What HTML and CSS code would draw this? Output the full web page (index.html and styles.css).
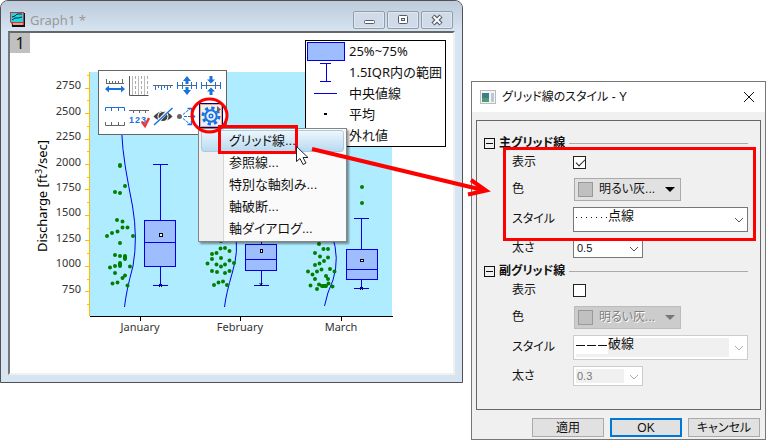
FILE: index.html
```html
<!DOCTYPE html>
<html lang="ja">
<head>
<meta charset="utf-8">
<title>Graph1</title>
<link rel="stylesheet" href="styles.css">
</head>
<body>
<main class="desktop">
  <section class="graph-window">
    <header class="titlebar">
      <svg class="app-icon" width="16" height="16" viewBox="0 0 16 16" aria-hidden="true">
        <path d="M1 1h14v14H2z" fill="#111"/>
        <path d="M0 0h14v13H3L0 10z" fill="#c33"/>
        <path d="M1 1h12v9H1z" fill="#18d8e0"/>
        <path d="M2 5l3-1 2-2 5 0M2 8l3-2 3 0 4-1" stroke="#124" fill="none"/>
        <path d="M3 12h10" stroke="#fff"/>
      </svg>
      <h1 class="window-title">Graph1 *</h1>
      <div class="window-buttons">
        <button class="wbtn" aria-label="最小化"><svg width="14" height="12" viewBox="0 0 14 12"><rect x="2.5" y="6.5" width="10" height="3" rx="1" fill="#fff" stroke="#555a66"/></svg></button>
        <button class="wbtn" aria-label="最大化"><svg width="14" height="12" viewBox="0 0 14 12"><rect x="2.5" y="1.5" width="9" height="8" rx="1" fill="#fff" stroke="#555a66"/><rect x="5.5" y="4.5" width="3" height="2" fill="#dde6f0" stroke="#555a66"/></svg></button>
        <button class="wbtn" aria-label="閉じる"><svg width="14" height="12" viewBox="0 0 14 12"><path d="M3 2L11 10M11 2L3 10" stroke="#555a66" stroke-width="4.4"/><path d="M3.5 2.5L10.5 9.5M10.5 2.5L3.5 9.5" stroke="#fff" stroke-width="2"/></svg></button>
      </div>
    </header>
    <div class="client">
      <span class="layer-tab">1</span>
      <svg class="chart" viewBox="10 33 443 340" preserveAspectRatio="xMinYMin meet" role="img" aria-label="Discharge">
        <rect x="90" y="72" width="302" height="244" fill="#b0ecff"/>
        <path d="M89.5 72V316M85 88.5h5M85 113.5h5M85 139.5h5M85 164.5h5M85 189.5h5M85 215.5h5M85 240.5h5M85 266.5h5M85 291.5h5M87 75.5h3M87 100.5h3M87 126.5h3M87 151.5h3M87 177.5h3M87 202.5h3M87 228.5h3M87 253.5h3M87 279.5h3M87 304.5h3" stroke="#ffbb00" fill="none"/>
        <path d="M90 316.5H393M140.5 317v4M240.5 317v4M341.5 317v4" stroke="#000" fill="none"/>
        <g class="tick-text y-text">
          <text x="81" y="89">2750</text><text x="81" y="115">2500</text><text x="81" y="140">2250</text>
          <text x="81" y="166">2000</text><text x="81" y="191">1750</text><text x="81" y="216">1500</text>
          <text x="81" y="242">1250</text><text x="81" y="267">1000</text><text x="81" y="293">750</text>
        </g>
        <g class="tick-text x-text">
          <text x="140" y="331">January</text><text x="240" y="331">February</text><text x="341" y="331">March</text>
        </g>
        <text class="axis-title" transform="translate(47 252) rotate(-90)">Discharge [ft<tspan class="sup" dy="-5">3</tspan><tspan dy="5">/sec]</tspan></text>
        <g fill="none" stroke="#0000e8">
          <path d="M121.5 130Q122.5 150 125.5 168T132.5 206Q138 238 133 266Q126 292 124.5 307"/>
          <path d="M235 235Q239 250 232.5 272Q226 294 224.5 307"/>
          <path d="M332 235Q340 258 333 280Q327 293 324.5 306"/>
        </g>
        <g stroke="#0000e8" fill="#9dbdff">
          <path d="M160.5 220V164.5M153 164.5h15M160.5 267v18.5M153 285.5h15"/><rect x="144.5" y="220.5" width="31" height="46"/><path d="M145 242.5h31"/>
          <path d="M261.5 244V200M261.5 271v14.5M254 285.5h15"/><rect x="245.5" y="244.5" width="31" height="26"/><path d="M246 259.5h31"/>
          <path d="M361.5 249V218.5M354 218.5h15M361.5 280v8.5M354 288.5h15"/><rect x="346.5" y="249.5" width="31" height="30"/><path d="M347 269.5h31"/>
        </g>
        <g fill="#fff" stroke="#000"><rect x="159.5" y="233.5" width="3" height="3"/><rect x="260.5" y="249.5" width="2" height="3"/><rect x="360.5" y="259.5" width="3" height="2"/></g>
        <path d="M159 284l3 3M162 284l-3 3M259.5 283l3 3M262.5 283l-3 3M360 287l3 3M363 287l-3 3" stroke="#000"/>
        <path class="dots" d="M120 165v1M125 186h0M115 192h0M120 193h0M117 220h0M122.5 221.5h0M122.5 227.5h0M127.5 227.5h0M107 236h0M112 233h0M117.5 231.5h0M133 236h0M120 243h0M115 255h0M120 256h0M125 256v3M120 263v3M115 266h0M110 267.5h0M130 266.5h0M115 273h0M125 275.5h0M122.5 278h0M112.5 283.5h0M117.5 282.5h0M127.5 285.5h0"/>
        <path class="dots" d="M207.5 263.5h0M212 254h0M216.5 253h0M212 259h0M220.5 248.5h0M225 248h0M229.5 251h0M221 258h0M216.5 264.5h0M221 266.5h0M225 264.5h0M229.5 260.5h0M234 263h0M212 271h0M217 272h0M225 273h0M229.5 271h0M214 285h0M218.5 282.5h0M223 281.5h0M227 285h0M221 241h0"/>
        <path class="dots" d="M362 187h0M362 203h0M319 244h0M323.5 249h0M328 249h0M315 253h0M320 256.5h0M328 257.5h0M315 265h0M319.5 263.5h0M324 261h0M308 271.5h0M312.5 274.5h0M317 271.5h0M321.5 269.5h0M330 269h0M334.5 271.5h0M326 276h0M328 279h0M315 279h0M310.5 285.5h0M319 284.5h0M322 286h4M317 289h0M332.5 286.5h0M328.5 283.5h0"/>
      </svg>
      <ul class="legend">
        <li><svg width="40" height="21" viewBox="0 0 40 21"><rect x="1.5" y="1.5" width="37" height="18" fill="#9dbdff" stroke="#0000e8"/></svg>25%~75%</li>
        <li><svg width="40" height="21" viewBox="0 0 40 21"><path d="M20.5 1.5v18M14 1.5h11M14 19.5h11" stroke="#0000e8"/></svg>1.5IQR内の範囲</li>
        <li><svg width="40" height="21" viewBox="0 0 40 21"><path d="M8 10.5h23" stroke="#0000e8"/></svg>中央値線</li>
        <li><svg width="40" height="21" viewBox="0 0 40 21"><path d="M18 9h3v2h-3z"/></svg>平均</li>
        <li><svg width="40" height="21" viewBox="0 0 40 21"></svg>外れ値</li>
      </ul>
      <div class="toolbar">
        <button class="tool" aria-label="軸の長さ"><svg viewBox="0 0 24 24"><path d="M5 10.5h18M5.5 6v4M8.5 8v2M11.5 8v2M14.5 8v2M17.5 8v2M21.5 6v4" stroke="#666"/><path d="M4 16l4-3.500v2.500h12v-2.500l4 3.500-4 3.500v-2.500h-12v2.500z" fill="#1a72de"/></svg></button>
        <button class="tool" aria-label="グリッド"><svg viewBox="0 0 24 24"><path d="M4.5 3v19.500h19" stroke="#555" fill="none"/><path d="M7.5 3v19M13.5 3v19M19.5 3v19" stroke="#bbb"/><path d="M10.5 3v19M16.5 3v19M22.5 3v19" stroke="#aaa" stroke-dasharray="3 2"/></svg></button>
        <button class="tool" aria-label="目盛"><svg viewBox="0 0 24 24"><path d="M4 12.5h20" stroke="#666"/><path d="M6.5 13v4M9.5 13v2M12.5 13v4M15.5 13v2M18.5 13v4M21.5 13v2" stroke="#1a72de"/></svg></button>
        <button class="tool" aria-label="拡大"><svg viewBox="0 0 24 24"><path d="M4 12.5h20" stroke="#666"/><path d="M4.5 9v7M9.5 9v7M18.5 9v7M23.5 9v7" stroke="#1a72de"/><path d="M14 3l4 5h-2.500v3h-3V8H10zM14 22l4-5h-2.500v-3h-3v3H10z" fill="#1a72de"/></svg></button>
        <button class="tool" aria-label="縮小"><svg viewBox="0 0 24 24"><path d="M4 12.5h20" stroke="#666"/><path d="M4.5 9v7M9.5 9v7M18.5 9v7M23.5 9v7" stroke="#1a72de"/><path d="M14 10.500l4-4h-2.500V3h-3v3.500H10zM14 14.500l4 4h-2.500V22h-3v-3.500H10z" fill="#1a72de"/></svg></button>
        <button class="tool" aria-label="反対側の軸"><svg viewBox="0 0 24 24"><path d="M4.5 7V3.500h19V7M10.5 4v3M17.5 4v3" stroke="#1a72de" fill="none"/><path d="M4.5 18v3.500h19V18M10.5 18v3M17.5 18v3" stroke="#666" fill="none"/></svg></button>
        <button class="tool" aria-label="目盛ラベル"><svg viewBox="0 0 24 24"><path d="M4 6.5h20M8.5 7v2M14.5 7v2M20.5 7v2" stroke="#666"/><text class="num" x="4" y="19">1</text><text class="num" x="10" y="19">2</text><text class="num" x="16" y="19">3</text><path d="M17 18l3 4 4-8" stroke="#ed3537" stroke-width="2.5" fill="none"/></svg></button>
        <button class="tool" aria-label="非表示"><svg viewBox="0 0 24 24"><path d="M4.5 12.5Q14 2 23.5 12.5Q14 22 4.5 12.5z" fill="#404040"/><circle cx="14" cy="12.5" r="5.5" fill="#fff"/><circle cx="14" cy="12.5" r="4.5" fill="#404040"/><path d="M7 19.500L22 4" stroke="#fff" stroke-width="3"/><path d="M5 21L23.500 4" stroke="#1a72de" stroke-width="1.5"/></svg></button>
        <button class="tool" aria-label="線の方向"><svg viewBox="0 0 24 24"><circle cx="6.5" cy="12.5" r="2.5" fill="#666"/><g stroke="#1a72de" fill="none"><path d="M10 10.500L18 4M11 12.500h10M10 14.500L18 21" stroke-dasharray="3 1"/><path d="M14.500 4.500h4v4M18.500 9.500l3 3-3 3M14.500 20.500h4v-4" stroke-width="1.5"/></g></svg></button>
        <button class="tool active" aria-label="軸の設定"><svg viewBox="0 0 24 24"><circle cx="12" cy="12" r="8" fill="none" stroke="#1a72de" stroke-width="3" stroke-dasharray="3.2 3.083"/><circle cx="12" cy="12" r="5.7" fill="none" stroke="#1a72de" stroke-width="2"/><circle cx="12" cy="12" r="1.8" fill="none" stroke="#1a72de" stroke-width="1.4"/><path d="M18 2l4 3.500-4 3.500z" fill="#666"/></svg></button>
      </div>
      <div class="menu">
        <button class="menu-item hot">グリッド線...</button>
        <button class="menu-item">参照線...</button>
        <button class="menu-item">特別な軸刻み...</button>
        <button class="menu-item">軸破断...</button>
        <button class="menu-item">軸ダイアログ...</button>
      </div>
    </div>
  </section>

  <section class="dialog">
    <header class="dialog-title">
      <svg width="16" height="14" viewBox="0 0 16 14" aria-hidden="true"><rect x=".5" y=".5" width="15" height="13" fill="#f4f4f4" stroke="#bbb"/><path d="M2 3h7v9H2z" fill="#3c7d88"/><path d="M2 8h7v4H2z" fill="#4d9b78"/><path d="M11 3h3v9h-3z" fill="#b8c8d8"/></svg>
      <h2 class="dialog-name">グリッド線のスタイル - Y</h2>
      <button class="close" aria-label="閉じる"><svg width="12" height="12" viewBox="0 0 12 12"><path d="M1 1l10 10M11 1L1 11" stroke="#111"/></svg></button>
    </header>
    <form class="panel">
      <fieldset class="group">
        <legend class="group-head"><svg width="11" height="11" viewBox="0 0 11 11"><rect x=".5" y=".5" width="10" height="10" fill="none" stroke="#111"/><path d="M2 5.5h7" stroke="#111"/></svg><span>主グリッド線</span></legend>
        <div class="row check-row"><label for="show1">表示</label><input class="check" id="show1" type="checkbox" checked></div>
        <div class="row"><label for="color1">色</label><button class="color" id="color1" type="button"><i class="swatch"></i><span>明るい灰...</span><i class="caret"></i></button></div>
        <div class="row"><label for="style1">スタイル</label><span class="select-box wide"><select id="style1"><option>点線</option></select><svg class="line-sample" width="33" height="17" viewBox="0 0 33 17"><path d="M1 8h1v1h-1zM6 8h1v1h-1zM11 8h1v1h-1zM16 8h1v1h-1zM21 8h1v1h-1zM26 8h1v1h-1zM31 8h1v1h-1z" fill="#111"/></svg><svg class="chevron" width="10" height="6" viewBox="0 0 10 6"><path d="M1 1l4 4 4-4"/></svg></span></div>
        <div class="row size-row"><label for="size1">太さ</label><span class="select-box small"><select id="size1"><option>0.5</option></select><svg class="chevron" width="10" height="6" viewBox="0 0 10 6"><path d="M1 1l4 4 4-4"/></svg></span></div>
      </fieldset>
      <fieldset class="group">
        <legend class="group-head"><svg width="11" height="11" viewBox="0 0 11 11"><rect x=".5" y=".5" width="10" height="10" fill="none" stroke="#111"/><path d="M2 5.5h7" stroke="#111"/></svg><span>副グリッド線</span></legend>
        <div class="row check-row"><label for="show2">表示</label><input class="check" id="show2" type="checkbox"></div>
        <div class="row"><label for="color2">色</label><button class="color" id="color2" type="button" disabled><i class="swatch"></i><span>明るい灰...</span><i class="caret"></i></button></div>
        <div class="row"><label for="style2">スタイル</label><span class="select-box wide off"><select id="style2" disabled><option>破線</option></select><svg class="line-sample" width="33" height="17" viewBox="0 0 33 17"><path d="M0 0h33v17H0z" fill="#fff"/><path d="M1 8.5h31" stroke="#111" stroke-dasharray="9 2"/></svg><svg class="chevron" width="10" height="6" viewBox="0 0 10 6"><path d="M1 1l4 4 4-4"/></svg></span></div>
        <div class="row size-row"><label for="size2">太さ</label><span class="select-box small off"><select id="size2" disabled><option>0.3</option></select><svg class="chevron" width="10" height="6" viewBox="0 0 10 6"><path d="M1 1l4 4 4-4"/></svg></span></div>
      </fieldset>
    </form>
    <footer class="actions">
      <button class="action">適用</button>
      <button class="action default">OK</button>
      <button class="action">キャンセル</button>
    </footer>
  </section>

  <svg class="marks" width="766" height="440" viewBox="0 0 766 440" aria-hidden="true">
    <g fill="none" stroke="#f00" stroke-width="3">
      <ellipse cx="209.5" cy="115.5" rx="17.5" ry="16.5"/>
      <rect x="219.5" y="126.5" width="77" height="26"/>
      <rect x="504.5" y="148.5" width="250" height="91"/>
      <path d="M312 149L485 190.500" stroke-width="4"/>
      <path d="M471 180L486 190.500L468 194.500" stroke-width="4"/>
    </g>
    <path d="M296.500 146.500v15l3.500-3 3 6 3-1.500-3-5.500h5z" fill="#fff" stroke="#223"/>
  </svg>
</main>
</body>
</html>
```

FILE: styles.css
```css
* { box-sizing: border-box; }
body {
  margin: 0;
  background: #fff;
  color: #111;
  font: 12px/16px "Liberation Sans", "Noto Sans CJK JP", sans-serif;
  font-feature-settings: "palt";
}
button, select, input { font: inherit; color: inherit; margin: 0; font-feature-settings: inherit; }
button { padding: 0; }
svg { display: block; flex: none; }
h1, h2, ul { margin: 0; padding: 0; font-weight: normal; }

.desktop { position: relative; display: flex; align-items: flex-start; gap: 8px; }

/* Graph window */
.graph-window {
  flex: 1;
  min-width: 0;
  border: 1px solid #505055;
  border-radius: 8px 8px 0 0;
  background: #d7e4f2;
  padding: 0 7px 7px;
}
.titlebar {
  display: flex;
  align-items: center;
  height: 30px;
  margin: 0 -7px;
  padding: 7px 9px 0;
  gap: 4px;
  border-radius: 7px 7px 0 0;
  background: linear-gradient(#bccad9, #d7e4f2);
}
.window-title { flex: 1; color: #999; font: 13px/16px "Noto Sans", sans-serif; }
.window-buttons { display: flex; gap: 2px; }
.wbtn {
  display: flex;
  align-items: center;
  justify-content: center;
  width: 32px;
  height: 18px;
  border: 1px solid #929dab;
  border-radius: 2px;
  background: #cfdbe8;
  box-shadow: inset 0 0 0 1px #dfe8f2;
}
.client {
  position: relative;
  border: 2px solid #f0f0f0;
  border-top-color: #666;
  border-left-color: #777;
  background: #fff;
}
.layer-tab {
  position: absolute;
  top: 0;
  left: 0;
  width: 20px;
  background: #c0c0c0;
  font: 16px/20px "Noto Sans", sans-serif;
  text-align: center;
}
.chart { width: 100%; height: 340px; }
.tick-text { font: 11px "Noto Sans", sans-serif; fill: #333; }
.y-text { text-anchor: end; }
.x-text { text-anchor: middle; }
.axis-title { font: 13px "Noto Sans", sans-serif; }
.sup { font-size: 9px; }
.dots { stroke: #008000; stroke-width: 4; stroke-linecap: round; fill: none; }

.legend {
  position: absolute;
  top: 7px;
  left: 295px;
  width: 141px;
  border: 1px solid #000;
  background: #fff;
  list-style: none;
  font: 13px/21px "Noto Sans", "Noto Sans CJK JP", sans-serif;
}
.legend li { display: flex; align-items: center; gap: 3px; white-space: nowrap; }

.toolbar {
  position: absolute;
  top: 37px;
  left: 88px;
  display: grid;
  grid-template-columns: repeat(5, 24px);
  row-gap: 6px;
  padding: 1px 5px 6px 2px;
  border: 1px solid #666;
  background: #fff;
}
.tool { width: 24px; height: 25px; border: 0; background: none; }
.tool svg { width: 24px; height: 24px; overflow: visible; }
.num { font: bold 9px "Liberation Sans", sans-serif; fill: #1a72de; }
.active {
  display: flex;
  align-items: center;
  justify-content: center;
  margin-left: 2px;
  border: 1px solid #000080;
  background: #e9f0fa;
  box-shadow: inset 0 0 0 1px #f0a070;
}

.menu {
  position: absolute;
  top: 95px;
  left: 188px;
  width: 149px;
  padding: 1px 2px;
  border: 1px solid #858585;
  background: linear-gradient(90deg, #f0f0f0 24px, #d5d5d5 24px, #d5d5d5 25px, #fafafa 25px);
  box-shadow: 2px 2px 2px rgba(0, 0, 0, .4);
}
.menu-item {
  display: block;
  width: 100%;
  height: 22px;
  padding: 0 0 0 27px;
  border: 1px solid transparent;
  border-radius: 3px;
  background: none;
  text-align: left;
  font-size: 13px;
  line-height: 18px;
}
.hot { border-color: #a8cbe5; background: linear-gradient(#edf6fc, #b9daf1); }

/* Dialog */
.dialog {
  width: 295px;
  margin-top: 81px;
  border: 1px solid #777;
  background: #f0f0f0;
}
.dialog-title {
  display: flex;
  align-items: center;
  gap: 6px;
  height: 30px;
  padding: 0 10px 0 8px;
  background: #fff;
}
.dialog-name { flex: 1; font-size: 12px; }
.close { border: 0; background: none; }
.panel { margin: 8px 4px; padding: 15px 12px 17px 7px; border: 1px solid #666; }
.group { margin: 0 0 2px; padding: 0; border: 0; }
.group-head {
  display: flex;
  align-items: center;
  gap: 4px;
  width: 100%;
  height: 14px;
  padding: 0;
  font-weight: bold;
}
.group-head::after { content: ""; flex: 1; height: 1px; background: #aaa; }
.row { display: grid; grid-template-columns: 61px 1fr; align-items: center; height: 30px; padding-left: 28px; }
.check-row { height: 24px; }
.size-row { height: 28px; }
.check {
  appearance: none;
  position: relative;
  width: 13px;
  height: 13px;
  border: 1px solid #222;
  background: #fff;
}
.check:checked::after {
  content: "";
  position: absolute;
  top: 2px;
  left: 2px;
  width: 8px;
  height: 4px;
  border: solid #222;
  border-width: 0 0 1px 1px;
  transform: rotate(-45deg);
}
.color {
  display: flex;
  align-items: center;
  width: 107px;
  height: 23px;
  margin-left: 1px;
  padding: 0 5px 0 3px;
  border: 1px solid #aaa;
  background: #e1e1e1;
}
.color span { flex: 1; padding-left: 6px; text-align: left; }
.swatch { width: 15px; height: 15px; border: 1px solid #999; background: #c0c0c0; }
.caret { border: 5px solid transparent; border-top-color: #000; border-bottom: 0; }
.color:disabled { border-color: #bbb; background: #ccc; color: #808080; text-shadow: 1px 1px #fff; }
.color:disabled .caret { border-top-color: #777; }
.select-box { position: relative; display: block; }
.select-box select {
  appearance: none;
  display: block;
  width: 100%;
  height: 100%;
  padding: 0 20px 0 3px;
  border: 1px solid #777;
  border-radius: 0;
  background: #fff;
  opacity: 1;
}
.wide { height: 25px; }
.wide select { padding: 0 20px 6px 34px; font-size: 13px; }
.small { width: 70px; height: 20px; }
.small select { font-size: 11px; }
.line-sample { position: absolute; top: 2px; left: 2px; }
.chevron { position: absolute; right: 4px; top: 50%; margin-top: -2px; fill: none; stroke: #555; }
.off select { border-color: #ccc; background: linear-gradient(90deg, #f0f0f0, #f0f0f0) 2px 2px / calc(100% - 20px) calc(100% - 4px) no-repeat #fff; }
.small.off select { color: #777; }
.off .chevron { stroke: #aaa; }
.actions { display: flex; justify-content: flex-end; gap: 6px; padding: 0 5px 2px; }
.action { width: 72px; height: 19px; border: 1px solid #aaa; background: #e1e1e1; }
.default { border: 2px solid #0078d7; }

/* Annotations lie over both windows */
.marks { position: absolute; top: 0; left: 0; pointer-events: none; }
```
